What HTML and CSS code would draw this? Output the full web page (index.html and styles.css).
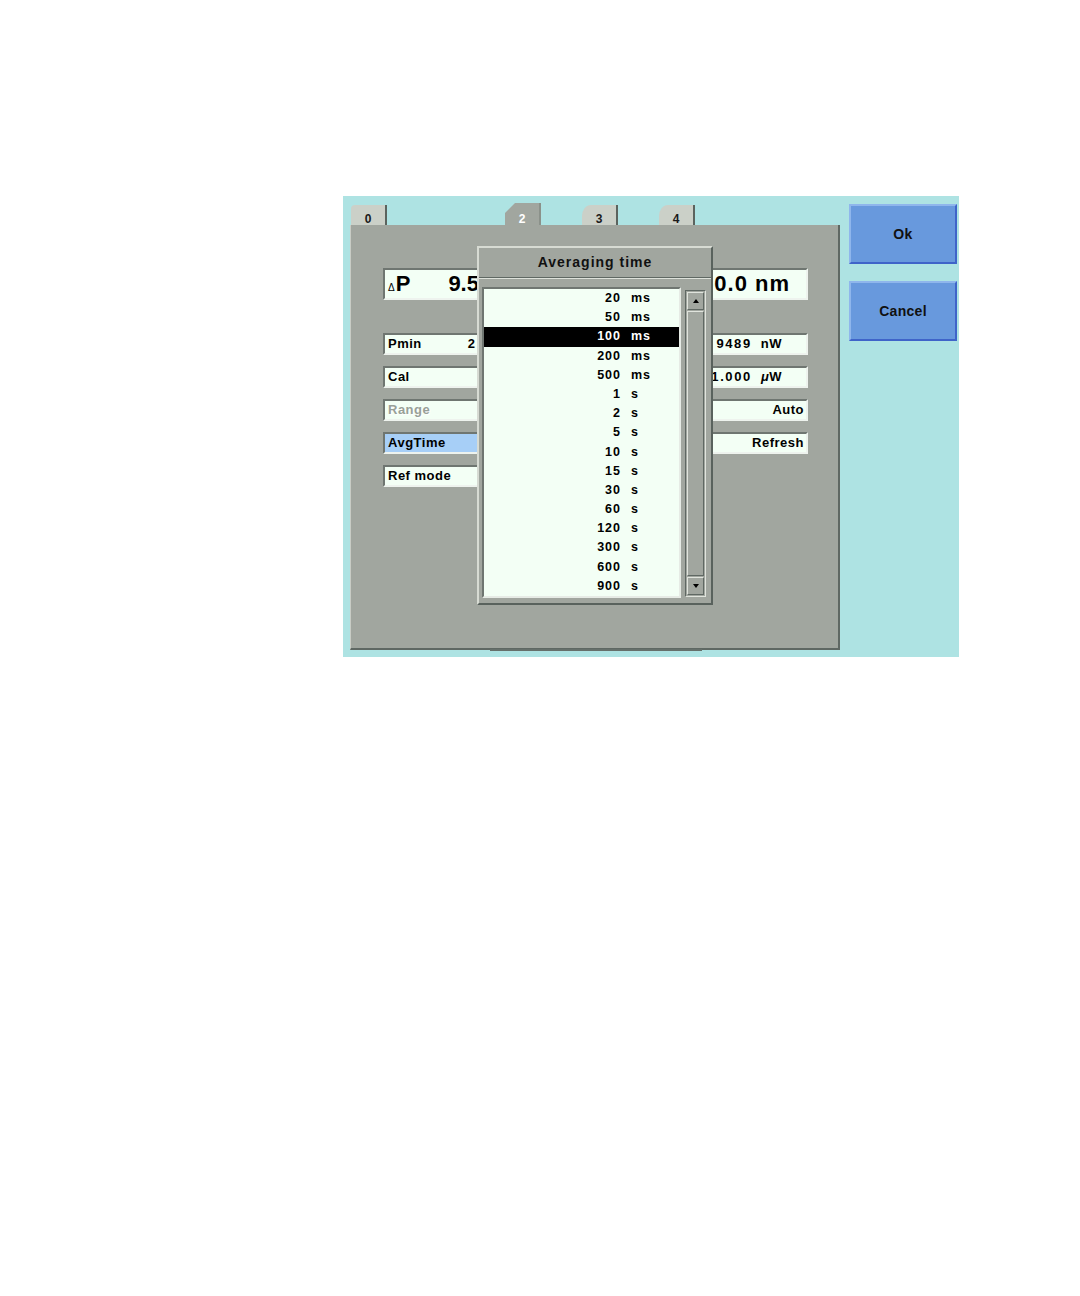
FILE: index.html
```html
<!DOCTYPE html>
<html>
<head>
<meta charset="utf-8">
<title>Averaging time</title>
<link rel="stylesheet" href="styles.css">
</head>
<body>
<div class="page">
  <div class="screen">
    <div class="left">
      <div class="tabs">
        <div class="tab t0">0</div>
        <div class="tab spacer"></div>
        <div class="tab sel">2</div>
        <div class="tab round">3</div>
        <div class="tab round">4</div>
      </div>
      <div class="panel">
        <div class="bigfield">
          <span class="delta">Δ</span><span class="p">P</span><span class="val">9.5</span><span class="fill"></span><span class="wl">1550.0 nm</span>
        </div>
        <div class="rows">
          <div class="row">
            <div class="box lbox">Pmin<span class="two">2</span></div>
            <div class="box rbox unitpad"><span class="num">9489</span><span class="unit">nW</span></div>
          </div>
          <div class="row">
            <div class="box lbox">Cal</div>
            <div class="box rbox unitpad"><span class="num">1.000</span><span class="unit"><i>μ</i>W</span></div>
          </div>
          <div class="row">
            <div class="box lbox disabled">Range</div>
            <div class="box rbox">Auto</div>
          </div>
          <div class="row">
            <div class="box lbox active">AvgTime</div>
            <div class="box rbox">Refresh</div>
          </div>
          <div class="row">
            <div class="box lbox">Ref mode</div>
          </div>
        </div>

        <div class="dialog">
          <div class="dtitle">Averaging time</div>
          <div class="dbody">
            <div class="list">
              <div class="item"><span class="n">20</span><span class="u">ms</span></div>
              <div class="item"><span class="n">50</span><span class="u">ms</span></div>
              <div class="item selected"><span class="n">100</span><span class="u">ms</span></div>
              <div class="item"><span class="n">200</span><span class="u">ms</span></div>
              <div class="item"><span class="n">500</span><span class="u">ms</span></div>
              <div class="item"><span class="n">1</span><span class="u">s</span></div>
              <div class="item"><span class="n">2</span><span class="u">s</span></div>
              <div class="item"><span class="n">5</span><span class="u">s</span></div>
              <div class="item"><span class="n">10</span><span class="u">s</span></div>
              <div class="item"><span class="n">15</span><span class="u">s</span></div>
              <div class="item"><span class="n">30</span><span class="u">s</span></div>
              <div class="item"><span class="n">60</span><span class="u">s</span></div>
              <div class="item"><span class="n">120</span><span class="u">s</span></div>
              <div class="item"><span class="n">300</span><span class="u">s</span></div>
              <div class="item"><span class="n">600</span><span class="u">s</span></div>
              <div class="item"><span class="n">900</span><span class="u">s</span></div>
            </div>
            <div class="sb">
              <div class="sbtn"><span class="arr up"></span></div>
              <div class="thumb"></div>
              <div class="sbtn"><span class="arr down"></span></div>
            </div>
          </div>
        </div>
      </div>
    </div>
    <div class="buttons">
      <div class="btn">Ok</div>
      <div class="btn">Cancel</div>
    </div>
  </div>
</div>
</body>
</html>
```
FILE: styles.css
```css
html, body {
  margin: 0;
  padding: 0;
  background: #ffffff;
}
body {
  font-family: "Liberation Sans", Arial, sans-serif;
  color: #111;
}
.page {
  padding: 196px 0 0 343px;
}
.screen {
  width: 616px;
  height: 461px;
  box-sizing: border-box;
  background: #aee3e3;
  display: flex;
  padding-left: 7px;
}
.left {
  width: 490px;
  display: flex;
  flex-direction: column;
  padding-top: 7px;
}
.tabs {
  display: flex;
  align-items: flex-end;
  gap: 41px;
  height: 22px;
  margin-left: 1px;
}
.tab {
  width: 36px;
  height: 20px;
  box-sizing: border-box;
  background: #cbd0c8;
  border-right: 2px solid #5b635e;
  font-size: 12px;
  font-weight: bold;
  line-height: 12px;
  padding-top: 8px;
  text-align: center;
  color: #1a1a1a;
}
.tab.t0 {
  border-top-left-radius: 4px;
}
.tab.spacer {
  visibility: hidden;
}
.tab.round {
  border-top-left-radius: 9px 11px;
}
.tab.sel {
  height: 22px;
  padding-top: 10px;
  background: #a1a69f;
  color: #ffffff;
  border-right: 2px solid #8b918a;
  clip-path: polygon(0 100%, 0 10px, 10px 0, 100% 0, 100% 100%);
}
.panel {
  position: relative;
  height: 425px;
  box-sizing: border-box;
  background: #a1a69f;
  border-left: 1px solid #c8ccc5;
  border-right: 2px solid #5f6863;
  border-bottom: 2px solid #5f6863;
  padding: 43px 0 0 32px;
}
.panel::after {
  content: "";
  position: absolute;
  left: 139px;
  width: 212px;
  bottom: -3px;
  height: 2px;
  background: #66706b;
}
.bigfield {
  width: 425px;
  height: 32px;
  box-sizing: border-box;
  border: 2px solid;
  border-color: #6f7671 #eef3ee #eef3ee #6f7671;
  background: #f3fff5;
  display: flex;
  align-items: baseline;
  padding: 0 16px 0 3px;
  font-size: 22px;
  font-weight: bold;
  line-height: 27px;
  color: #000;
  white-space: nowrap;
}
.delta {
  font-size: 10px;
  font-weight: normal;
}
.p {
  margin-left: 1px;
}
.val {
  margin-left: 38px;
}
.fill {
  flex: 1;
}
.wl {
  letter-spacing: 1px;
}
.rows {
  margin-top: 33px;
  width: 425px;
  display: flex;
  flex-direction: column;
  gap: 11px;
}
.row {
  display: flex;
  justify-content: space-between;
  height: 22px;
}
.box {
  height: 22px;
  box-sizing: border-box;
  border: 2px solid;
  border-color: #6f7671 #eef3ee #eef3ee #6f7671;
  background: #f3fff5;
  font-size: 13px;
  font-weight: bold;
  letter-spacing: 0.5px;
  line-height: 18px;
  padding: 0 3px;
  white-space: nowrap;
  color: #000;
}
.lbox {
  width: 200px;
  display: flex;
}
.two {
  margin-left: 46px;
}
.rbox {
  width: 208px;
  text-align: right;
  padding-right: 2px;
}
.rbox.unitpad {
  padding-right: 24px;
}
.num {
  letter-spacing: 1.6px;
}
.unit {
  margin-left: 9px;
  letter-spacing: 0.5px;
}
.lbox.active {
  background: #a7cff7;
}
.lbox.disabled {
  color: #98a098;
  text-shadow: 1px 1px 0 #ffffff;
}
.dialog {
  position: absolute;
  left: 126px;
  top: 21px;
  width: 236px;
  height: 359px;
  box-sizing: border-box;
  background: #a1a69f;
  border: 2px solid;
  border-color: #d7dbd3 #59625d #59625d #d7dbd3;
  display: flex;
  flex-direction: column;
}
.dtitle {
  height: 29px;
  line-height: 29px;
  text-align: center;
  font-size: 14px;
  font-weight: bold;
  letter-spacing: 1px;
  color: #111;
  border-bottom: 1px solid #5f6863;
  box-shadow: 0 1px 0 #dde1da;
}
.dbody {
  display: flex;
  align-items: flex-start;
  padding: 9px 0 0 3px;
  gap: 4px;
}
.list {
  width: 199px;
  box-sizing: border-box;
  border: 2px solid;
  border-color: #6f7671 #e6ebe5 #e6ebe5 #6f7671;
  background: #f3fff5;
  display: flex;
  flex-direction: column;
}
.item {
  height: 19.2px;
  line-height: 19.2px;
  display: grid;
  grid-template-columns: 137px auto;
  column-gap: 10px;
  font-size: 12.5px;
  font-weight: bold;
  letter-spacing: 1px;
  color: #000;
}
.item .n {
  text-align: right;
}
.item.selected {
  background: #000;
  color: #fff;
}
.sb {
  margin-top: 3px;
  width: 21px;
  height: 307px;
  box-sizing: border-box;
  border: 1px solid;
  border-color: #5f6863 #e0e4dd #e0e4dd #5f6863;
  background: #a1a69f;
  display: flex;
  flex-direction: column;
  padding: 1px;
}
.sbtn {
  height: 18px;
  box-sizing: border-box;
  border: 1px solid;
  border-color: #e0e4dd #5f6863 #5f6863 #e0e4dd;
  display: flex;
  align-items: center;
  justify-content: center;
}
.thumb {
  flex: 1;
  margin: 1px 0;
  border: 1px solid;
  border-color: #e0e4dd #5f6863 #5f6863 #e0e4dd;
}
.arr {
  width: 0;
  height: 0;
  border-left: 3.5px solid transparent;
  border-right: 3.5px solid transparent;
}
.arr.up {
  border-bottom: 4px solid #000;
}
.arr.down {
  border-top: 4px solid #000;
}
.buttons {
  margin-left: 9px;
  padding-top: 8px;
  display: flex;
  flex-direction: column;
  gap: 17px;
}
.btn {
  width: 108px;
  height: 60px;
  box-sizing: border-box;
  background: #6899dd;
  border: 2px solid;
  border-color: #8fb6ec #3f64c9 #3f64c9 #8fb6ec;
  display: flex;
  align-items: center;
  justify-content: center;
  font-size: 14px;
  font-weight: bold;
  letter-spacing: 0.3px;
  color: #111;
}
```
